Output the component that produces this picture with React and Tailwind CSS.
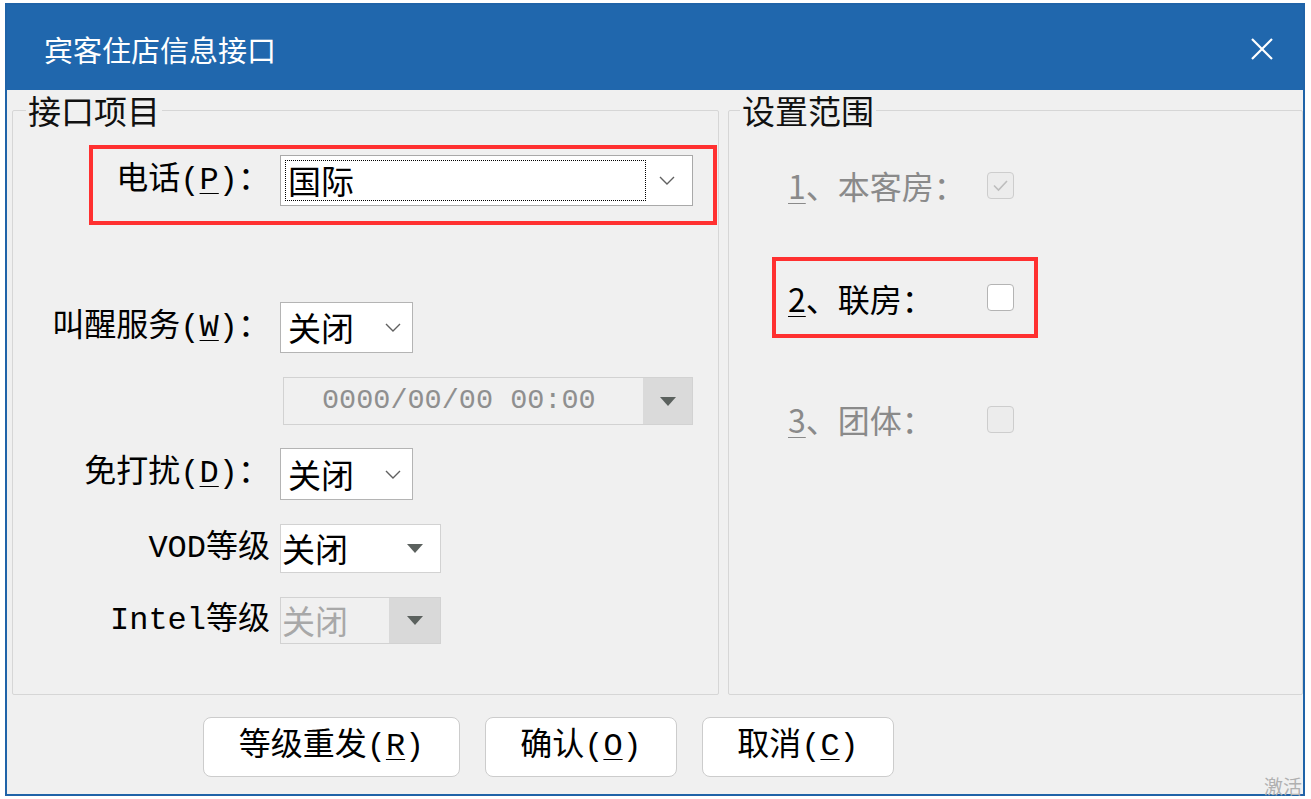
import React from "react";

const cjk = "font-['Noto_Sans_CJK_SC',sans-serif]";
const mix = "font-['Liberation_Mono','Noto_Sans_CJK_SC',monospace]";

// thin "v" used by the Win10 style combo boxes
const Chevron = () => (
  <svg width="16" height="9" viewBox="0 0 16 9" className="shrink-0">
    <polyline points="1,1 8,8 15,1" fill="none" stroke="#606060" strokeWidth="1.4" />
  </svg>
);

const Triangle = () => (
  <svg width="16" height="9" viewBox="0 0 16 9">
    <polygon points="0,0 16,0 8,9" fill="#5b615e" />
  </svg>
);

const Mnemonic = ({ children }) => (
  <span className="underline decoration-1 underline-offset-[4px]">{children}</span>
);

const Checkbox = ({ checked, disabled }) => (
  <div
    className={
      "w-[27px] h-[27px] rounded-[4px] border flex items-center justify-center " +
      (disabled ? "border-[#cdcdcd] bg-[#ececec]" : "border-[#b4b4b4] bg-white")
    }
  >
    {checked && (
      <svg width="17" height="13" viewBox="0 0 17 13">
        <polyline points="2,6.5 6.5,11 15,2" fill="none" stroke="#bdbdbd" strokeWidth="1.6" />
      </svg>
    )}
  </div>
);

const Label = ({ width, children, className = "" }) => (
  <div className={`text-right text-[32px] leading-none text-black whitespace-nowrap ${mix} ${className}`} style={{ width }}>
    {children}
  </div>
);

const btn = `h-[60px] bg-white border border-[#cccccc] rounded-[8px] text-[32px] leading-none text-black ${mix}`;

export default function App() {
  return (
    <div className={`relative w-[1311px] h-[799px] bg-white overflow-hidden ${cjk}`}>
      <div className="ml-[5px] mt-[3px] w-[1300px] h-[793px] border-2 border-[#1f63a8] bg-[#f0f0f0] flex flex-col">
        {/* title bar */}
        <div className="h-[85px] bg-[#2067ad] flex items-center justify-between pl-[37px] pr-[29px] pt-[3px] shrink-0">
          <span className="text-white text-[29px] leading-none">宾客住店信息接口</span>
          <svg width="24" height="24" viewBox="0 0 24 24">
            <path d="M2 2 L22 22 M22 2 L2 22" stroke="#ffffff" strokeWidth="2.2" />
          </svg>
        </div>

        <div className="flex-1 flex flex-col pl-[5px] pt-[2px]">
          <div className="flex gap-[9px]">
            {/* 接口项目 */}
            <fieldset className="w-[707px] h-[603px] border border-[#d6d6d6] rounded-[2px] p-0 m-0 min-w-0">
              <legend className="ml-[13px] px-[2px] text-[33px] leading-[36px] text-[#111]">接口项目</legend>

              <div className="mt-[17px] ml-[76px] w-[628px] h-[80px] border-4 border-[#ff3030]">
                <div className="mt-[6px] flex items-center">
                  <Label width={177}>
                    电话(<Mnemonic>P</Mnemonic>)：
                  </Label>
                  <div className="ml-[10px] w-[413px] h-[51px] bg-white border border-[#a9a9a9] flex items-center p-[4px]">
                    <div className="flex-1 h-full border border-dotted border-black flex items-center pl-[2px]">
                      <span className="text-[33px] leading-none">国际</span>
                    </div>
                    <div className="w-[42px] flex justify-center">
                      <Chevron />
                    </div>
                  </div>
                </div>
              </div>

              <div className="mt-[77px] flex items-center">
                <Label width={257}>
                  叫醒服务(<Mnemonic>W</Mnemonic>)：
                </Label>
                <div className="ml-[10px] w-[133px] h-[51px] bg-white border border-[#b4b4b4] flex items-center justify-between pl-[7px] pr-[11px]">
                  <span className="text-[33px] leading-none">关闭</span>
                  <Chevron />
                </div>
              </div>

              <div className="mt-[24px] ml-[270px] w-[410px] h-[48px] bg-[#f0f0f0] border border-[#d2d2d2] flex">
                <div className="flex-1 flex items-center pl-[38px] text-[28.5px] leading-none text-[#8f8f8f] whitespace-pre font-['Liberation_Mono',monospace]">
                  0000/00/00 00:00
                </div>
                <div className="w-[49px] bg-[#dadada] flex items-center justify-center">
                  <Triangle />
                </div>
              </div>

              <div className="mt-[23px] flex items-center">
                <Label width={257}>
                  免打扰(<Mnemonic>D</Mnemonic>)：
                </Label>
                <div className="ml-[10px] w-[133px] h-[52px] bg-white border border-[#b4b4b4] flex items-center justify-between pl-[7px] pr-[11px]">
                  <span className="text-[33px] leading-none">关闭</span>
                  <Chevron />
                </div>
              </div>

              <div className="mt-[24px] flex items-center">
                <Label width={257}>VOD等级</Label>
                <div className="ml-[10px] w-[161px] h-[49px] bg-white border border-[#d2d2d2] flex items-center justify-between pl-[1px] pr-[17px]">
                  <span className="text-[33px] leading-none">关闭</span>
                  <Triangle />
                </div>
              </div>

              <div className="mt-[24px] flex items-center">
                <Label width={257}>Intel等级</Label>
                <div className="ml-[10px] w-[161px] h-[47px] bg-[#f0f0f0] border border-[#d2d2d2] flex">
                  <div className="flex-1 flex items-center pl-[1px]">
                    <span className="text-[33px] leading-none text-[#a8a8a8]">关闭</span>
                  </div>
                  <div className="w-[51px] bg-[#d9d9d9] flex items-center justify-center">
                    <Triangle />
                  </div>
                </div>
              </div>
            </fieldset>

            {/* 设置范围 */}
            <fieldset className="w-[575px] h-[603px] border border-[#d6d6d6] rounded-[2px] p-0 m-0 min-w-0">
              <legend className="ml-[11px] px-[2px] text-[33px] leading-[36px] text-[#111]">设置范围</legend>

              <div className="mt-[37px] ml-[59px] h-[40px] flex items-center">
                <div className="w-[199px] text-[32px] leading-none text-[#8a8a8a]">
                  <Mnemonic>1</Mnemonic>、本客房：
                </div>
                <Checkbox checked disabled />
              </div>

              <div className="mt-[52px] ml-[43px] w-[266px] h-[81px] border-4 border-[#ff3030] flex items-center pl-[12px]">
                <div className="w-[199px] text-[32px] leading-none text-black">
                  <Mnemonic>2</Mnemonic>、联房：
                </div>
                <Checkbox />
              </div>

              <div className="mt-[61px] ml-[59px] h-[40px] flex items-center">
                <div className="w-[199px] text-[32px] leading-none text-[#8a8a8a]">
                  <Mnemonic>3</Mnemonic>、团体：
                </div>
                <Checkbox disabled />
              </div>
            </fieldset>
          </div>

          {/* buttons */}
          <div className="mt-[22px] pl-[191px] flex gap-[25px]">
            <button className={`w-[257px] ${btn}`}>
              等级重发(<Mnemonic>R</Mnemonic>)
            </button>
            <button className={`w-[192px] ${btn}`}>
              确认(<Mnemonic>O</Mnemonic>)
            </button>
            <button className={`w-[192px] ${btn}`}>
              取消(<Mnemonic>C</Mnemonic>)
            </button>
          </div>
        </div>
      </div>

      <span className="absolute left-[1264px] top-[776px] text-[19px] leading-none text-[#b0b0b0]">激活</span>
    </div>
  );
}
